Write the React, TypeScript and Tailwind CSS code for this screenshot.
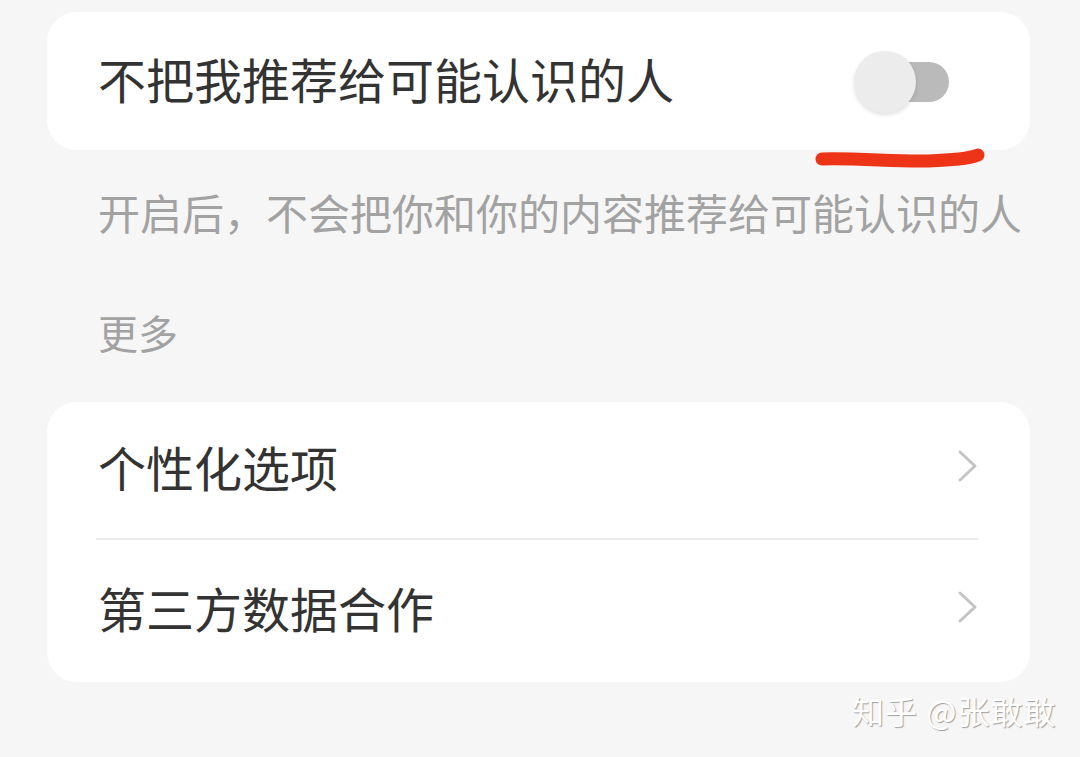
import React from 'react';

const font = { fontFamily: '"Noto Sans CJK SC", "Noto Sans", sans-serif' };

function Chevron() {
    return (
        <svg width="24" height="34" viewBox="0 0 24 34" fill="none" className="shrink-0">
            <path d="M4 3 L19 17 L4 31" stroke="#c4c4c4" strokeWidth="3" strokeLinecap="round" strokeLinejoin="round" />
        </svg>
    );
}

function Toggle() {
    return (
        <div className="relative w-[96px] h-[62px] shrink-0">
            <div className="absolute left-[15px] top-[11px] w-[80px] h-[40px] rounded-full bg-[#bababa]" />
            <div className="absolute left-0 top-0 w-[62px] h-[62px] rounded-full bg-[#ececec] shadow-[0_2px_4px_rgba(0,0,0,0.12)]" />
        </div>
    );
}

function Row({ label, height }: { label: string; height: string }) {
    return (
        <div className={`${height} flex items-center justify-between pl-[51px] pr-[50px] pb-[8px]`}>
            <span className="text-[48px] leading-none text-[#333333]">{label}</span>
            <Chevron />
        </div>
    );
}

export default function App() {
    return (
        <div className="relative w-[1080px] h-[757px] overflow-hidden bg-[#f6f6f6]" style={font}>
            <div className="pl-[47px] pr-[50px] pt-[12px]">
                {/* toggle card */}
                <div className="h-[138px] rounded-[30px] bg-white flex items-center justify-between pl-[51px] pr-[80px]">
                    <span className="text-[48px] leading-none text-[#333333] pb-[6px]">不把我推荐给可能认识的人</span>
                    <div className="pt-[2px]">
                        <Toggle />
                    </div>
                </div>

                <div className="h-[124px] flex items-center pl-[51px]">
                    <span className="text-[42px] leading-none text-[#a2a2a2] whitespace-nowrap">开启后，不会把你和你的内容推荐给可能认识的人</span>
                </div>

                <div className="h-[128px] flex items-center pl-[51px] pb-[12px]">
                    <span className="text-[40px] leading-none text-[#a2a2a2]">更多</span>
                </div>

                <div className="rounded-[30px] bg-white">
                    <Row label="个性化选项" height="h-[136px]" />
                    <div className="ml-[49px] mr-[52px] h-[2px] bg-[#ececec]" />
                    <Row label="第三方数据合作" height="h-[142px]" />
                </div>
            </div>

            {/* red marker stroke */}
            <svg className="absolute left-[808px] top-[144px]" width="184" height="32" viewBox="0 0 184 32" fill="none">
                <path d="M14 15 C50 14 90 18 120 17 C145 16 160 15 170 11" stroke="#ee3417" strokeWidth="13" strokeLinecap="round" />
            </svg>

            {/* watermark */}
            <div className="absolute left-[852px] top-[688px] text-[32px] leading-[44px] tracking-[1px] text-white whitespace-nowrap [text-shadow:1px_1px_1px_rgba(0,0,0,0.35)]">
                知乎 @张敢敢
            </div>
        </div>
    );
}
